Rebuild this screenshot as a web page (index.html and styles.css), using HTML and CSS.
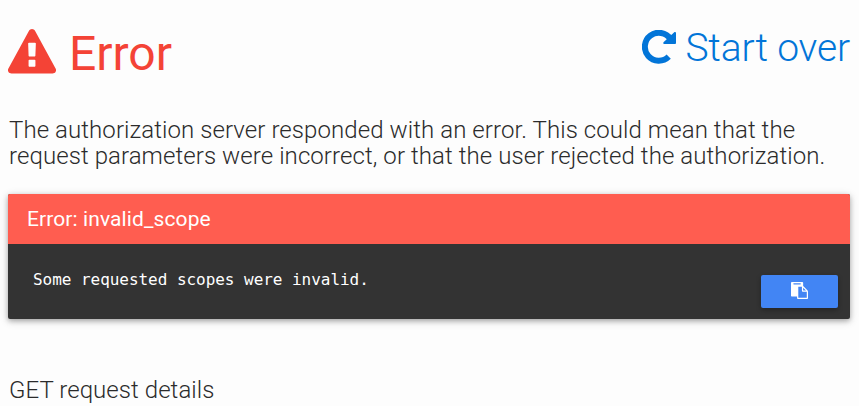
FILE: index.html
```html
<!DOCTYPE html>
<html lang="en">
<head>
<meta charset="utf-8">
<title>Error</title>
<link rel="stylesheet" href="styles.css">
</head>
<body>
<header class="top">
<h1 class="title"><svg class="warning" viewBox="0 0 1792 1792" aria-hidden="true"><path d="M1024 1375v-190q0-14-9.5-23.5t-22.5-9.5h-192q-13 0-22.5 9.5t-9.5 23.5v190q0 14 9.5 23.5t22.5 9.5h192q13 0 22.500-9.500t9.500-23.500zm-2-374l18-459q0-12-10-19-13-11-24-11h-220q-11 0-24 11-10 7-10 21l17 457q0 10 10 16.500t24 6.500h185q14 0 23.500-6.500t10.500-16.500zm-14-934l768 1408q35 63-2 126-17 29-46.500 46t-63.500 17h-1536q-34 0-63.500-17t-46.500-46q-37-63-2-126l768-1408q17-31 47-49t65-18 65 18 47 49z"/></svg><span>Error</span></h1>
<a class="restart"><svg class="redo" viewBox="0 0 34 34" aria-hidden="true"><path class="ring" d="M26.700 26.700A14 14 0 1 1 28.500 9"/><path d="M32.500 2Q34 1.600 34 3V13Q34 14 33 14H22Q20.500 13.500 21.500 12.300Z"/></svg><span>Start over</span></a>
</header>
<p class="intro">The authorization server responded with an error. This could mean that the request parameters were incorrect, or that the user rejected the authorization.</p>
<section class="card">
<h2 class="card-title">Error: invalid_scope</h2>
<div class="card-body">
<pre class="message">Some requested scopes were invalid.</pre>
<button class="copy" aria-label="Copy"><svg class="paste" viewBox="0 0 1792 1792" aria-hidden="true"><path d="M768 1664h896v-640h-416q-40 0-68-28t-28-68v-416h-384v1152zm256-1440v-64q0-13-9.500-22.500t-22.500-9.500h-704q-13 0-22.500 9.500t-9.500 22.500v64q0 13 9.500 22.500t22.500 9.500h704q13 0 22.500-9.500t9.500-22.500zm256 672h299l-299-299v299zm512 128v672q0 40-28 68t-68 28h-960q-40 0-68-28t-28-68v-160h-544q-40 0-68-28t-28-68v-1344q0-40 28-68t68-28h1088q40 0 68 28t28 68v328q21 13 36 28l408 408q28 28 48 76t20 88z"/></svg></button>
</div>
</section>
<h3 class="details">GET request details</h3>
</body>
</html>
```
FILE: styles.css
```css
* { box-sizing: border-box; }
body {
  margin: 0;
  padding: 25px 9px 0 8px;
  height: 406px;
  overflow: hidden;
  background: #fdfdfd;
  color: #2b2b2b;
  font-family: Roboto, sans-serif;
}
svg { display: block; fill: currentColor; }
h1, h2, h3, p, pre { margin: 0; }
.top { display: flex; justify-content: space-between; height: 92px; }
.title {
  display: flex;
  gap: 13px;
  height: 57px;
  color: #f44336;
  font-size: 48px;
  font-weight: 400;
  line-height: 57px;
}
.warning { width: 48px; height: 48px; margin-top: 4px; }
.restart {
  display: flex;
  gap: 9px;
  height: 46px;
  color: #0275d8;
  font-size: 39px;
  font-weight: 300;
  line-height: 46px;
  letter-spacing: -.15px;
}
.redo { width: 34px; height: 34px; margin-top: 5px; }
.ring { fill: none; stroke: currentColor; stroke-width: 6; }
.intro {
  height: 77px;
  padding-left: 1px;
  font-size: 24px;
  font-weight: 300;
  line-height: 26.4px;
  letter-spacing: .08px;
}
.card {
  height: 125px;
  border-radius: 2px;
  overflow: hidden;
  background: #333;
  box-shadow: 0 2px 5px rgba(0, 0, 0, .26), 0 2px 10px rgba(0, 0, 0, .16);
}
.card-title {
  height: 50px;
  padding-left: 19px;
  background: #ff5d50;
  color: #fff;
  font-size: 21px;
  font-weight: 400;
  line-height: 50px;
  letter-spacing: .1px;
}
.card-body {
  display: flex;
  justify-content: space-between;
  height: 75px;
  padding: 26px 12px 11px 25px;
}
.message {
  color: #fff;
  font: 16px/20px "DejaVu Sans Mono", monospace;
  letter-spacing: -.04px;
}
.copy {
  display: flex;
  align-items: center;
  justify-content: center;
  align-self: flex-end;
  width: 77px;
  height: 33px;
  padding: 0;
  border: 0;
  border-radius: 2px;
  background: #4285f4;
  color: #fff;
  box-shadow: 0 2px 5px rgba(0, 0, 0, .3);
}
.paste { width: 17px; height: 17px; margin-top: -2px; }
.details {
  margin-top: 57px;
  padding-left: 1px;
  font-size: 24px;
  font-weight: 300;
  line-height: 28px;
  letter-spacing: .06px;
}
```
